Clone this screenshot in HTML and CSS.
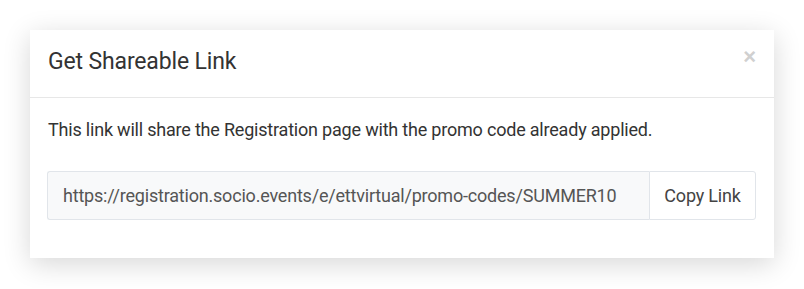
FILE: index.html
```html
<!DOCTYPE html>
<html>
<head>
<meta charset="utf-8">
<link rel="stylesheet" href="styles.css">
</head>
<body>
<div class="modal">
  <div class="modal-header">
    <h4 class="modal-title">Get Shareable Link</h4>
    <button class="close" type="button">&times;</button>
  </div>
  <div class="modal-body">
    <p class="desc">This link will share the Registration page with the promo code already applied.</p>
    <div class="input-group">
      <input class="link-input" type="text" readonly value="https://registration.socio.events/e/ettvirtual/promo-codes/SUMMER10">
      <button class="copy-btn" type="button">Copy Link</button>
    </div>
  </div>
</div>
</body>
</html>
```
FILE: styles.css
```css
html, body {
  margin: 0;
  padding: 0;
  background: #ffffff;
  font-family: Roboto, "Liberation Sans", sans-serif;
}
body {
  padding: 30px 30px 30px 30px;
}
.modal {
  width: 744px;
  background: #fff;
  box-shadow: 0 6px 26px rgba(0, 0, 0, 0.16);
}
.modal-header {
  display: flex;
  align-items: flex-start;
  justify-content: space-between;
  height: 68px;
  box-sizing: border-box;
  padding: 17px 18px 0 18px;
  border-bottom: 1px solid #e7e7e7;
}
.modal-title {
  margin: 0;
  font-size: 23px;
  line-height: 30px;
  letter-spacing: -0.15px;
  font-weight: 400;
  color: #333;
}
.close {
  border: none;
  background: none;
  padding: 0;
  margin-top: -1px;
  font-size: 22px;
  line-height: 1;
  color: #d0d0d0;
  font-family: "Liberation Sans", sans-serif;
  font-weight: 700;
}
.modal-body {
  padding: 20px 18px 38px 17px;
}
.desc {
  margin: 0 0 29px 1px;
  font-size: 18px;
  line-height: 24px;
  letter-spacing: -0.2px;
  color: #333;
}
.input-group {
  display: flex;
  height: 49px;
}
.link-input {
  flex: 1;
  min-width: 0;
  box-sizing: border-box;
  height: 49px;
  padding: 0 15px;
  border: 1px solid #e1e5ea;
  border-right: none;
  border-radius: 3px 0 0 3px;
  background: #f8f9fa;
  font-family: Roboto, "Liberation Sans", sans-serif;
  font-size: 18px;
  letter-spacing: -0.2px;
  color: #555;
  outline: none;
}
.copy-btn {
  box-sizing: border-box;
  width: 107px;
  height: 49px;
  border: 1px solid #e1e5ea;
  border-radius: 0 3px 3px 0;
  background: #fff;
  font-family: Roboto, "Liberation Sans", sans-serif;
  font-size: 18px;
  letter-spacing: -0.2px;
  color: #444;
  padding: 0;
}
```
